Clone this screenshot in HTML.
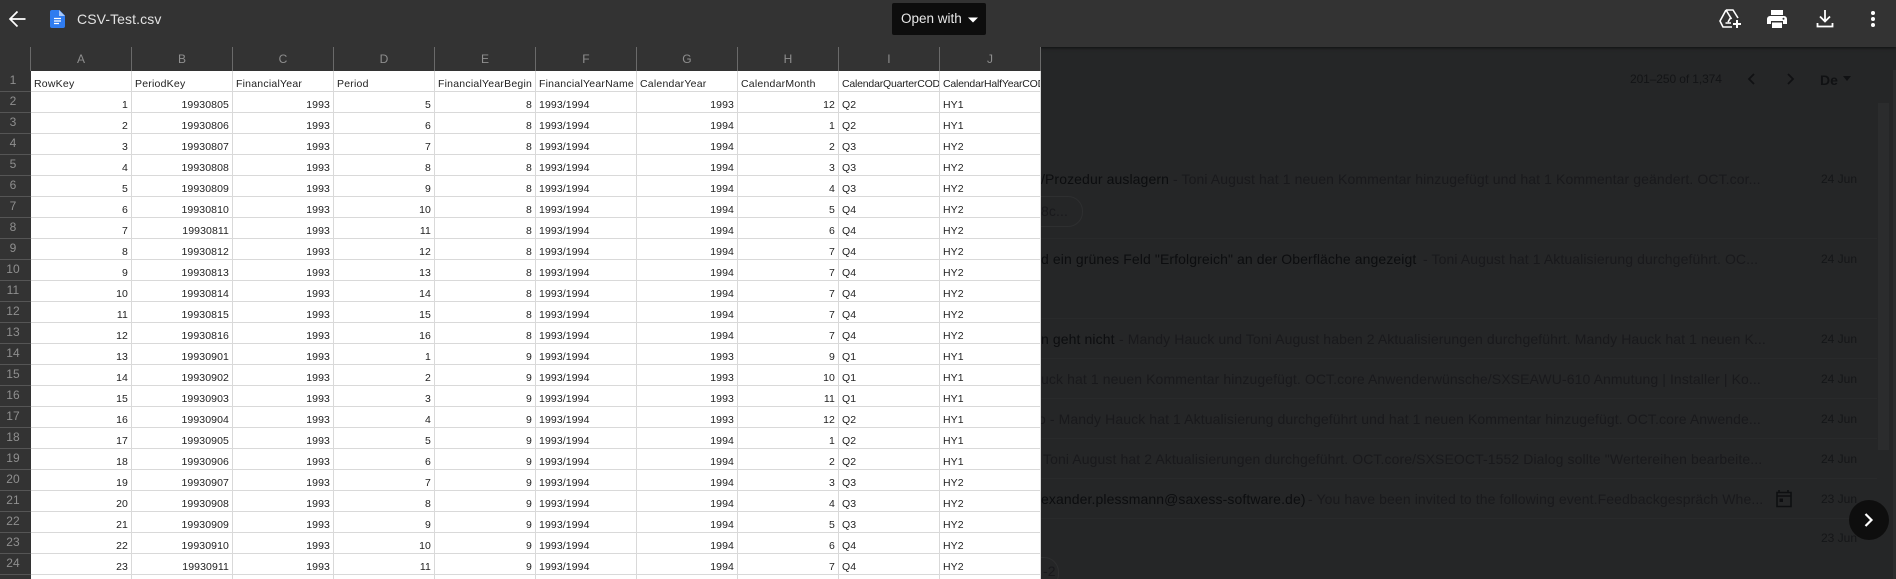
<!DOCTYPE html>
<html><head><meta charset="utf-8"><title>CSV-Test.csv</title>
<style>
html,body{margin:0;padding:0;width:1896px;height:579px;overflow:hidden;background:#252627;font-family:"Liberation Sans",sans-serif}
#wrap{position:absolute;left:0;top:0;width:1896px;height:579px;overflow:hidden;background:#252627}
.a{position:absolute;white-space:nowrap}
#top{position:absolute;left:0;top:0;width:1896px;height:47px;background:#333;box-shadow:0 1px 3px rgba(0,0,0,.6)}
.t{font-size:14px;line-height:20px;color:#19191c;letter-spacing:.1px}
.t b{font-weight:400;color:#0c0d0f}
.d{font-size:12px;line-height:16px;color:#151618;left:1821px}
.s{height:1px;left:1041px;width:836px;background:#292a2b}
table{position:absolute;left:0;top:47px;border-collapse:collapse;table-layout:fixed;width:1041px;background:#fff;font-size:10.5px;color:#222;letter-spacing:.1px}
col.r{width:30.5px}col.c{width:101px}
th{background:#333;color:#8f8f8f;font-weight:400;height:23.5px;padding:0;border-right:1px solid #6a6a6a;font-size:12px;box-sizing:border-box;vertical-align:middle}
td{height:21px;padding:5px 3px 0;box-sizing:border-box;border-right:1px solid #d9d9d9;border-bottom:1px solid #d9d9d9;overflow:hidden;white-space:nowrap;line-height:14px;text-align:left}
td.n{text-align:right}
td.h{background:#333;color:#8f8f8f;font-size:12px;text-align:center;border-right:1px solid #333;border-bottom:1px solid #555;padding:0 4px 2px 0}
tr.f td{padding-top:6px;letter-spacing:.22px}
tr.f td.h{padding-top:0;letter-spacing:.1px}
tr.f td.e{padding:6px 0 0 3px;text-overflow:clip;letter-spacing:-.2px}
</style></head><body><div id="wrap">

<div class="a t" style="left:1041px;top:169px"><b>/Prozedur auslagern</b></div>
<div class="a t" style="left:1173px;top:169px">- Toni August hat 1 neuen Kommentar hinzugefügt und hat 1 Kommentar geändert. OCT.cor...</div>
<div class="a" style="left:960px;top:196px;width:121px;height:29px;border:1px solid #2e2f30;border-radius:15px"></div>
<div class="a t" style="left:1041px;top:201px">8c...</div>
<div class="a s" style="top:238px"></div>
<div class="a t" style="left:1041px;top:249px"><b>d ein grünes Feld "Erfolgreich" an der Oberfläche angezeigt</b></div>
<div class="a t" style="left:1423px;top:249px">- Toni August hat 1 Aktualisierung durchgeführt. OC...</div>
<div class="a s" style="top:318px"></div>
<div class="a t" style="left:1041px;top:329px"><b>n geht nicht</b></div>
<div class="a t" style="left:1119px;top:329px">- Mandy Hauck und Toni August haben 2 Aktualisierungen durchgeführt. Mandy Hauck hat 1 neuen K...</div>
<div class="a s" style="top:358px"></div>
<div class="a t" style="left:1041px;top:369px">uck hat 1 neuen Kommentar hinzugefügt. OCT.core Anwenderwünsche/SXSEAWU-610 Anmutung | Installer | Ko...</div>
<div class="a s" style="top:398px"></div>
<div class="a t" style="left:1038px;top:409px">o - Mandy Hauck hat 1 Aktualisierung durchgeführt und hat 1 neuen Kommentar hinzugefügt. OCT.core Anwende...</div>
<div class="a s" style="top:438px"></div>
<div class="a t" style="left:1043px;top:449px">Toni August hat 2 Aktualisierungen durchgeführt. OCT.core/SXSEOCT-1552 Dialog sollte "Wertereihen bearbeite...</div>
<div class="a s" style="top:478px"></div>
<div class="a t" style="left:1041px;top:489px"><b>exander.plessmann@saxess-software.de)</b></div>
<div class="a t" style="left:1308px;top:489px">- You have been invited to the following event.Feedbackgespräch Whe...</div>
<div class="a s" style="top:518px"></div>
<div class="a" style="left:1020px;top:557px;width:37px;height:30px;border:1px solid #2e2f30;border-radius:15px"></div>
<div class="a t" style="left:1043px;top:561px">-2</div>

<div class="a d" style="top:171px">24 Jun</div>
<div class="a d" style="top:251px">24 Jun</div>
<div class="a d" style="top:331px">24 Jun</div>
<div class="a d" style="top:371px">24 Jun</div>
<div class="a d" style="top:411px">24 Jun</div>
<div class="a d" style="top:451px">24 Jun</div>
<div class="a d" style="top:491px">23 Jun</div>
<div class="a d" style="top:530px">23 Jun</div>

<svg class="a" style="left:1775px;top:489px" width="18" height="19" viewBox="0 0 18 19"><path d="M4 1v2M13 1v2M2 3.5h14v14H2zM2 7h14" fill="none" stroke="#0e0f11" stroke-width="1.6"/><rect x="4.5" y="9.5" width="3.5" height="3.5" fill="#0e0f11"/></svg>

<div class="a" style="left:1630px;top:71px;font-size:12px;line-height:16px;color:#131416;letter-spacing:-.1px">201–250 of 1,374</div>
<svg class="a" style="left:1745px;top:71px" width="12" height="16" viewBox="0 0 12 16"><path d="M9 3L4 8l5 5" fill="none" stroke="#101113" stroke-width="1.8"/></svg>
<svg class="a" style="left:1785px;top:71px" width="12" height="16" viewBox="0 0 12 16"><path d="M3 3l5 5-5 5" fill="none" stroke="#101113" stroke-width="1.8"/></svg>
<div class="a" style="left:1820px;top:71px;font-size:14px;line-height:18px;font-weight:700;color:#101113">De</div>
<svg class="a" style="left:1843px;top:76px" width="9" height="6"><path d="M0 0h8L4 5z" fill="#101113"/></svg>

<div class="a" style="left:1878px;top:103px;width:11px;height:347px;background:#2b2c2d"></div>
<div class="a" style="left:1893px;top:70px;width:3px;height:509px;background:#2c2d2e"></div>

<div class="a" style="left:1849px;top:500px;width:40px;height:40px;border-radius:50%;background:#0e0e0e"></div>
<svg class="a" style="left:1861px;top:511px" width="16" height="18" viewBox="0 0 16 18"><path d="M4.5 3l6 6-6 6" fill="none" stroke="#fff" stroke-width="2.2"/></svg>

<div id="top"></div>
<svg class="a" style="left:8px;top:9px" width="20" height="20" viewBox="0 0 20 20"><path d="M17.5 10H2.5M9.5 2.5L2 10l7.5 7.5" fill="none" stroke="#fff" stroke-width="1.7"/></svg>
<svg class="a" style="left:50px;top:10px" width="15" height="18" viewBox="0 0 15 18"><path d="M2 0h7.5L15 5.5V16a2 2 0 0 1-2 2H2a2 2 0 0 1-2-2V2a2 2 0 0 1 2-2z" fill="#2f7cf0"/><path d="M9 0l6 6H9z" fill="#a9c8f8"/><path d="M4 8.5h7M4 11h7M4 13.5h5" stroke="#fff" stroke-width="1.2"/></svg>
<div class="a" style="left:77px;top:10px;font-size:14px;line-height:18px;color:#e2e2e2;letter-spacing:.1px">CSV-Test.csv</div>
<div class="a" style="left:892px;top:3px;width:94px;height:32px;background:#0d0d0d;border-radius:2px"></div>
<div class="a" style="left:901px;top:10px;font-size:13.5px;line-height:18px;color:#e8e8e8">Open with</div>
<svg class="a" style="left:968px;top:17px" width="11" height="7"><path d="M0 .5h10L5 5.5z" fill="#fff"/></svg>

<svg class="a" style="left:1718px;top:8px" width="24" height="22" viewBox="0 0 24 22"><path d="M8 2h7l5 8M8 2L2 13l3 6h9M8 2l5.5 9M10 14l3-5M7.5 15H13" fill="none" stroke="#fff" stroke-width="1.6"/><path d="M19 12v8M15 16h8" stroke="#fff" stroke-width="2"/></svg>
<svg class="a" style="left:1766px;top:9px" width="22" height="20" viewBox="0 0 22 20"><path d="M5 1h12v5H5zM1 10a3 3 0 0 1 3-3h14a3 3 0 0 1 3 3v5h-4v-3H5v3H1z" fill="#fff"/><path d="M6 13.5h10V19H6z" fill="#fff"/><circle cx="17.5" cy="9.8" r="1" fill="#333"/></svg>
<svg class="a" style="left:1816px;top:9px" width="18" height="20" viewBox="0 0 18 20"><path d="M9 1v11M4 7.5l5 5 5-5M1.5 14v3.5h15V14" fill="none" stroke="#fff" stroke-width="1.8"/></svg>
<svg class="a" style="left:1870px;top:10px" width="6" height="18"><circle cx="3" cy="3" r="2" fill="#fff"/><circle cx="3" cy="9" r="2" fill="#fff"/><circle cx="3" cy="15" r="2" fill="#fff"/></svg>

<table>
<colgroup><col class="r"><col class="c"><col class="c"><col class="c"><col class="c"><col class="c"><col class="c"><col class="c"><col class="c"><col class="c"><col class="c"></colgroup>
<tr><th></th><th>A</th><th>B</th><th>C</th><th>D</th><th>E</th><th>F</th><th>G</th><th>H</th><th>I</th><th>J</th></tr>
<tr class="f"><td class="h">1</td><td>RowKey</td><td>PeriodKey</td><td>FinancialYear</td><td>Period</td><td>FinancialYearBegin</td><td>FinancialYearName</td><td>CalendarYear</td><td>CalendarMonth</td><td class="e">CalendarQuarterCODE</td><td class="e">CalendarHalfYearCODE</td></tr>
<tr><td class="h">2</td><td class="n">1</td><td class="n">19930805</td><td class="n">1993</td><td class="n">5</td><td class="n">8</td><td>1993/1994</td><td class="n">1993</td><td class="n">12</td><td>Q2</td><td>HY1</td></tr>
<tr><td class="h">3</td><td class="n">2</td><td class="n">19930806</td><td class="n">1993</td><td class="n">6</td><td class="n">8</td><td>1993/1994</td><td class="n">1994</td><td class="n">1</td><td>Q2</td><td>HY1</td></tr>
<tr><td class="h">4</td><td class="n">3</td><td class="n">19930807</td><td class="n">1993</td><td class="n">7</td><td class="n">8</td><td>1993/1994</td><td class="n">1994</td><td class="n">2</td><td>Q3</td><td>HY2</td></tr>
<tr><td class="h">5</td><td class="n">4</td><td class="n">19930808</td><td class="n">1993</td><td class="n">8</td><td class="n">8</td><td>1993/1994</td><td class="n">1994</td><td class="n">3</td><td>Q3</td><td>HY2</td></tr>
<tr><td class="h">6</td><td class="n">5</td><td class="n">19930809</td><td class="n">1993</td><td class="n">9</td><td class="n">8</td><td>1993/1994</td><td class="n">1994</td><td class="n">4</td><td>Q3</td><td>HY2</td></tr>
<tr><td class="h">7</td><td class="n">6</td><td class="n">19930810</td><td class="n">1993</td><td class="n">10</td><td class="n">8</td><td>1993/1994</td><td class="n">1994</td><td class="n">5</td><td>Q4</td><td>HY2</td></tr>
<tr><td class="h">8</td><td class="n">7</td><td class="n">19930811</td><td class="n">1993</td><td class="n">11</td><td class="n">8</td><td>1993/1994</td><td class="n">1994</td><td class="n">6</td><td>Q4</td><td>HY2</td></tr>
<tr><td class="h">9</td><td class="n">8</td><td class="n">19930812</td><td class="n">1993</td><td class="n">12</td><td class="n">8</td><td>1993/1994</td><td class="n">1994</td><td class="n">7</td><td>Q4</td><td>HY2</td></tr>
<tr><td class="h">10</td><td class="n">9</td><td class="n">19930813</td><td class="n">1993</td><td class="n">13</td><td class="n">8</td><td>1993/1994</td><td class="n">1994</td><td class="n">7</td><td>Q4</td><td>HY2</td></tr>
<tr><td class="h">11</td><td class="n">10</td><td class="n">19930814</td><td class="n">1993</td><td class="n">14</td><td class="n">8</td><td>1993/1994</td><td class="n">1994</td><td class="n">7</td><td>Q4</td><td>HY2</td></tr>
<tr><td class="h">12</td><td class="n">11</td><td class="n">19930815</td><td class="n">1993</td><td class="n">15</td><td class="n">8</td><td>1993/1994</td><td class="n">1994</td><td class="n">7</td><td>Q4</td><td>HY2</td></tr>
<tr><td class="h">13</td><td class="n">12</td><td class="n">19930816</td><td class="n">1993</td><td class="n">16</td><td class="n">8</td><td>1993/1994</td><td class="n">1994</td><td class="n">7</td><td>Q4</td><td>HY2</td></tr>
<tr><td class="h">14</td><td class="n">13</td><td class="n">19930901</td><td class="n">1993</td><td class="n">1</td><td class="n">9</td><td>1993/1994</td><td class="n">1993</td><td class="n">9</td><td>Q1</td><td>HY1</td></tr>
<tr><td class="h">15</td><td class="n">14</td><td class="n">19930902</td><td class="n">1993</td><td class="n">2</td><td class="n">9</td><td>1993/1994</td><td class="n">1993</td><td class="n">10</td><td>Q1</td><td>HY1</td></tr>
<tr><td class="h">16</td><td class="n">15</td><td class="n">19930903</td><td class="n">1993</td><td class="n">3</td><td class="n">9</td><td>1993/1994</td><td class="n">1993</td><td class="n">11</td><td>Q1</td><td>HY1</td></tr>
<tr><td class="h">17</td><td class="n">16</td><td class="n">19930904</td><td class="n">1993</td><td class="n">4</td><td class="n">9</td><td>1993/1994</td><td class="n">1993</td><td class="n">12</td><td>Q2</td><td>HY1</td></tr>
<tr><td class="h">18</td><td class="n">17</td><td class="n">19930905</td><td class="n">1993</td><td class="n">5</td><td class="n">9</td><td>1993/1994</td><td class="n">1994</td><td class="n">1</td><td>Q2</td><td>HY1</td></tr>
<tr><td class="h">19</td><td class="n">18</td><td class="n">19930906</td><td class="n">1993</td><td class="n">6</td><td class="n">9</td><td>1993/1994</td><td class="n">1994</td><td class="n">2</td><td>Q2</td><td>HY1</td></tr>
<tr><td class="h">20</td><td class="n">19</td><td class="n">19930907</td><td class="n">1993</td><td class="n">7</td><td class="n">9</td><td>1993/1994</td><td class="n">1994</td><td class="n">3</td><td>Q3</td><td>HY2</td></tr>
<tr><td class="h">21</td><td class="n">20</td><td class="n">19930908</td><td class="n">1993</td><td class="n">8</td><td class="n">9</td><td>1993/1994</td><td class="n">1994</td><td class="n">4</td><td>Q3</td><td>HY2</td></tr>
<tr><td class="h">22</td><td class="n">21</td><td class="n">19930909</td><td class="n">1993</td><td class="n">9</td><td class="n">9</td><td>1993/1994</td><td class="n">1994</td><td class="n">5</td><td>Q3</td><td>HY2</td></tr>
<tr><td class="h">23</td><td class="n">22</td><td class="n">19930910</td><td class="n">1993</td><td class="n">10</td><td class="n">9</td><td>1993/1994</td><td class="n">1994</td><td class="n">6</td><td>Q4</td><td>HY2</td></tr>
<tr><td class="h">24</td><td class="n">23</td><td class="n">19930911</td><td class="n">1993</td><td class="n">11</td><td class="n">9</td><td>1993/1994</td><td class="n">1994</td><td class="n">7</td><td>Q4</td><td>HY2</td></tr>
<tr><td class="h"></td><td></td><td></td><td></td><td></td><td></td><td></td><td></td><td></td><td></td><td></td></tr>
</table>
</div></body></html>
